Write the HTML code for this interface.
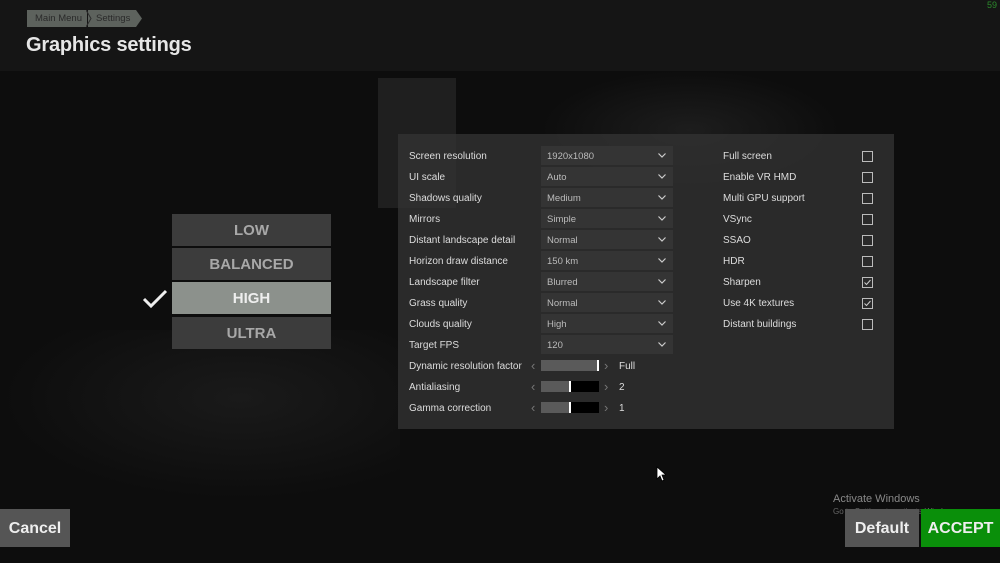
<!DOCTYPE html><html><head><style>
body{margin:0;width:1000px;height:563px;overflow:hidden;background:#0d0d0d;font-family:"Liberation Sans","DejaVu Sans",sans-serif;position:relative;color:#ddd}
.a{position:absolute}
.top{left:0;top:0;width:1000px;height:71px;background:#151515}
.bc{top:10px;height:17px;background:#5d625d;color:#2a2a2a;font-size:9.5px;line-height:17px}
h1{position:absolute;left:26px;top:34px;margin:0;font-size:20px;font-weight:bold;color:#e6e6e6;letter-spacing:-0.2px}
.panel{left:398px;top:134px;width:496px;height:295px;background:rgba(50,50,50,.8)}
.lb{font-size:10px;color:#ddd;line-height:12px}
.dd{left:541px;width:132px;height:19px;background:#343434;font-size:9.5px;color:#bbb;line-height:22px;padding-left:6px;box-sizing:border-box}
.dd svg{position:absolute;right:7px;top:7px}
.cb{left:862px;width:9px;height:9px;border:1px solid #bbb}
.t{left:172px;width:159px;height:32px;background:#3c3c3c;color:#a8a8a8;font-size:15px;font-weight:bold;text-align:center;line-height:34px}
.btn{height:38px;color:#eee;font-size:16px;font-weight:bold;text-align:center;line-height:39px}
.sl{left:541px;width:58px;height:11px;background:#000}
.sl i{position:absolute;left:0;top:0;height:11px;background:#5a5a5a}
.sl b{position:absolute;top:0;width:2px;height:11px;background:#fff}
.ar{font-size:13px;color:#777;line-height:12px}
</style></head><body>
<div class="a" style="left:378px;top:78px;width:78px;height:130px;background:#1f1f1f"></div>
<div class="a" style="left:540px;top:70px;width:300px;height:120px;background:radial-gradient(ellipse at center,#1d1d1d,#0d0d0d 70%)"></div>
<div class="a" style="left:0;top:330px;width:400px;height:170px;background:radial-gradient(ellipse at 60% 40%,#1a1a1a,#0d0d0d 70%)"></div>
<div class="a top"></div>
<div class="a bc" style="left:27px;width:60px;padding-left:8px;box-sizing:border-box">Main Menu</div>
<div class="a bc" style="left:88px;width:48px;padding-left:8px;box-sizing:border-box">Settings</div>
<svg class="a" style="left:86px;top:10px" width="60" height="17"><polygon points="50,0 56,8.5 50,17" fill="#5d625d"/><polyline points="0,0 5,8.5 0,17" fill="none" stroke="#2d2d2d" stroke-width="1"/></svg>
<h1>Graphics settings</h1>
<div class="a" style="left:987px;top:0;font-size:9px;color:#2c8a2c">59</div>

<div class="a panel"></div>
<div class="a lb" style="left:409px;top:151px">Screen resolution</div>
<div class="a lb" style="left:409px;top:172px">UI scale</div>
<div class="a lb" style="left:409px;top:193px">Shadows quality</div>
<div class="a lb" style="left:409px;top:214px">Mirrors</div>
<div class="a lb" style="left:409px;top:235px">Distant landscape detail</div>
<div class="a lb" style="left:409px;top:256px">Horizon draw distance</div>
<div class="a lb" style="left:409px;top:277px">Landscape filter</div>
<div class="a lb" style="left:409px;top:298px">Grass quality</div>
<div class="a lb" style="left:409px;top:319px">Clouds quality</div>
<div class="a lb" style="left:409px;top:340px">Target FPS</div>
<div class="a lb" style="left:409px;top:361px">Dynamic resolution factor</div>
<div class="a lb" style="left:409px;top:382px">Antialiasing</div>
<div class="a lb" style="left:409px;top:403px">Gamma correction</div>

<div class="a dd" style="top:146px">1920x1080<svg width="8" height="5"><polyline points="0.5,0.5 4,4 7.5,0.5" fill="none" stroke="#ccc" stroke-width="1.2"/></svg></div>
<div class="a dd" style="top:167px">Auto<svg width="8" height="5"><polyline points="0.5,0.5 4,4 7.5,0.5" fill="none" stroke="#ccc" stroke-width="1.2"/></svg></div>
<div class="a dd" style="top:188px">Medium<svg width="8" height="5"><polyline points="0.5,0.5 4,4 7.5,0.5" fill="none" stroke="#ccc" stroke-width="1.2"/></svg></div>
<div class="a dd" style="top:209px">Simple<svg width="8" height="5"><polyline points="0.5,0.5 4,4 7.5,0.5" fill="none" stroke="#ccc" stroke-width="1.2"/></svg></div>
<div class="a dd" style="top:230px">Normal<svg width="8" height="5"><polyline points="0.5,0.5 4,4 7.5,0.5" fill="none" stroke="#ccc" stroke-width="1.2"/></svg></div>
<div class="a dd" style="top:251px">150 km<svg width="8" height="5"><polyline points="0.5,0.5 4,4 7.5,0.5" fill="none" stroke="#ccc" stroke-width="1.2"/></svg></div>
<div class="a dd" style="top:272px">Blurred<svg width="8" height="5"><polyline points="0.5,0.5 4,4 7.5,0.5" fill="none" stroke="#ccc" stroke-width="1.2"/></svg></div>
<div class="a dd" style="top:293px">Normal<svg width="8" height="5"><polyline points="0.5,0.5 4,4 7.5,0.5" fill="none" stroke="#ccc" stroke-width="1.2"/></svg></div>
<div class="a dd" style="top:314px">High<svg width="8" height="5"><polyline points="0.5,0.5 4,4 7.5,0.5" fill="none" stroke="#ccc" stroke-width="1.2"/></svg></div>
<div class="a dd" style="top:335px">120<svg width="8" height="5"><polyline points="0.5,0.5 4,4 7.5,0.5" fill="none" stroke="#ccc" stroke-width="1.2"/></svg></div>

<div class="a ar" style="left:531px;top:360px">‹</div><div class="a sl" style="top:360px"><i style="width:56px"></i><b style="left:56px"></b></div><div class="a ar" style="left:604px;top:360px">›</div><div class="a lb" style="left:619px;top:361px">Full</div>
<div class="a ar" style="left:531px;top:381px">‹</div><div class="a sl" style="top:381px"><i style="width:28px"></i><b style="left:28px"></b></div><div class="a ar" style="left:604px;top:381px">›</div><div class="a lb" style="left:619px;top:382px">2</div>
<div class="a ar" style="left:531px;top:402px">‹</div><div class="a sl" style="top:402px"><i style="width:28px"></i><b style="left:28px"></b></div><div class="a ar" style="left:604px;top:402px">›</div><div class="a lb" style="left:619px;top:403px">1</div>

<div class="a lb" style="left:723px;top:151px">Full screen</div><div class="a cb" style="top:151px"></div>
<div class="a lb" style="left:723px;top:172px">Enable VR HMD</div><div class="a cb" style="top:172px"></div>
<div class="a lb" style="left:723px;top:193px">Multi GPU support</div><div class="a cb" style="top:193px"></div>
<div class="a lb" style="left:723px;top:214px">VSync</div><div class="a cb" style="top:214px"></div>
<div class="a lb" style="left:723px;top:235px">SSAO</div><div class="a cb" style="top:235px"></div>
<div class="a lb" style="left:723px;top:256px">HDR</div><div class="a cb" style="top:256px"></div>
<div class="a lb" style="left:723px;top:277px">Sharpen</div><div class="a cb" style="top:277px"><svg width="9" height="9" style="position:absolute;left:0;top:0"><polyline points="1.5,4.5 3.5,6.5 7.5,2" fill="none" stroke="#ccc" stroke-width="1"/></svg></div>
<div class="a lb" style="left:723px;top:298px">Use 4K textures</div><div class="a cb" style="top:298px"><svg width="9" height="9" style="position:absolute;left:0;top:0"><polyline points="1.5,4.5 3.5,6.5 7.5,2" fill="none" stroke="#ccc" stroke-width="1"/></svg></div>
<div class="a lb" style="left:723px;top:319px">Distant buildings</div><div class="a cb" style="top:319px"></div>

<div class="a t" style="top:214px">LOW</div>
<div class="a t" style="top:248px">BALANCED</div>
<div class="a t" style="top:282px;background:#8c918c;color:#eee">HIGH</div>
<div class="a t" style="top:317px">ULTRA</div>
<svg class="a" style="left:142px;top:289px" width="26" height="20"><polyline points="2,10 9,17 24,2" fill="none" stroke="#eee" stroke-width="3"/></svg>

<svg class="a" style="left:656px;top:466px" width="10" height="16"><polygon points="1,1 1,13 4,10 6,15 8,14 6,9 10,9" fill="#fff" stroke="#000" stroke-width="0.8"/></svg>
<div class="a" style="left:833px;top:493px;font-size:11px;color:#888">Activate Windows</div>
<div class="a" style="left:833px;top:507px;font-size:8px;color:#666">Go to Settings to activate Windows.</div>
<div class="a btn" style="left:0;top:509px;width:70px;background:#555">Cancel</div>
<div class="a btn" style="left:845px;top:509px;width:74px;background:#555">Default</div>
<div class="a btn" style="left:921px;top:509px;width:79px;background:#0a8f0a">ACCEPT</div>
</body></html>
